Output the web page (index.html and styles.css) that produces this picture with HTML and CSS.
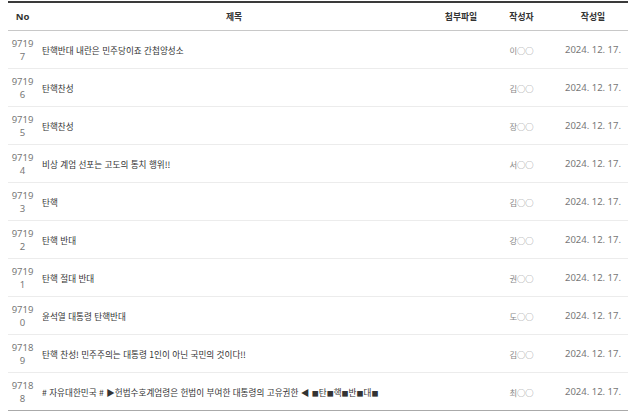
FILE: index.html
```html
<!DOCTYPE html>
<html lang="ko">
<head>
<meta charset="utf-8">
<link rel="stylesheet" href="styles.css">
</head>
<body>
<table class="board">
  <colgroup>
    <col class="c-no"><col class="c-title"><col class="c-file"><col class="c-author"><col class="c-date">
  </colgroup>
  <thead>
    <tr><th>No</th><th>제목</th><th>첨부파일</th><th>작성자</th><th class="date">작성일</th></tr>
  </thead>
  <tbody>
    <tr><td class="no">97197</td><td class="title">탄핵반대 내란은 민주당이죠 간첩양성소</td><td></td><td class="author">이○○</td><td class="date">2024. 12. 17.</td></tr>
    <tr><td class="no">97196</td><td class="title">탄핵찬성</td><td></td><td class="author">김○○</td><td class="date">2024. 12. 17.</td></tr>
    <tr><td class="no">97195</td><td class="title">탄핵찬성</td><td></td><td class="author">장○○</td><td class="date">2024. 12. 17.</td></tr>
    <tr><td class="no">97194</td><td class="title">비상 계엄 선포는 고도의 통치 행위!!</td><td></td><td class="author">서○○</td><td class="date">2024. 12. 17.</td></tr>
    <tr><td class="no">97193</td><td class="title">탄핵</td><td></td><td class="author">김○○</td><td class="date">2024. 12. 17.</td></tr>
    <tr><td class="no">97192</td><td class="title">탄핵 반대</td><td></td><td class="author">강○○</td><td class="date">2024. 12. 17.</td></tr>
    <tr><td class="no">97191</td><td class="title">탄핵 절대 반대</td><td></td><td class="author">권○○</td><td class="date">2024. 12. 17.</td></tr>
    <tr><td class="no">97190</td><td class="title">윤석열 대통령 탄핵반대</td><td></td><td class="author">도○○</td><td class="date">2024. 12. 17.</td></tr>
    <tr><td class="no">97189</td><td class="title">탄핵 찬성! 민주주의는 대통령 1인이 아닌 국민의 것이다!!</td><td></td><td class="author">김○○</td><td class="date">2024. 12. 17.</td></tr>
    <tr><td class="no">97188</td><td class="title"># 자유대한민국 # ▶헌법수호계엄령은 헌법이 부여한 대통령의 고유권한 ◀ <span class="sq">■</span>탄<span class="sq">■</span>핵<span class="sq">■</span>반<span class="sq">■</span>대<span class="sq">■</span></td><td></td><td class="author">최○○</td><td class="date">2024. 12. 17.</td></tr>
  </tbody>
</table>
</body>
</html>
```
FILE: styles.css
```css
html, body {
  background: #fff;
}
body {
  margin: 1px 12px 0 8px;
  font-family: "Noto Sans", "Noto Sans CJK KR", sans-serif;
  font-size: 9.5px;
  color: #555;
}
.board {
  width: 620px;
  border-collapse: collapse;
  table-layout: fixed;
  border-top: 2px solid #3a3a3a;
  border-bottom: 1px solid #aaa;
}
.c-no { width: 29px; }
.c-title { width: 394px; }
.c-file { width: 60px; }
.c-author { width: 61px; }
.c-date { width: 76px; }

th {
  height: 27px;
  padding: 0;
  font-family: "Noto Sans CJK KR", sans-serif;
  font-size: 8.8px;
  font-weight: 700;
  color: #333;
  text-align: center;
  border-bottom: 1px solid #c8c8c8;
}
th:first-child {
  font-family: "Noto Sans", sans-serif;
  font-size: 9.5px;
}
th.date, td.date { padding-left: 6px; }

td {
  height: 37px;
  padding: 0;
  border-bottom: 1px solid #ececec;
  text-align: center;
  vertical-align: middle;
}
tbody tr:last-child td { border-bottom: none; }
td.no {
  padding: 0 2px;
  word-break: break-all;
  line-height: 13px;
  color: #777;
}
td.title {
  text-align: left;
  padding-left: 5px;
  font-family: "Noto Sans CJK KR", sans-serif;
  font-size: 8.6px;
  color: #333;
  white-space: nowrap;
  overflow: hidden;
}
.sq {
  font-size: 7px;
}
td.author {
  font-family: "Noto Sans CJK KR", sans-serif;
  font-size: 8.3px;
  color: #888;
}
td.date {
  color: #777;
}
```
